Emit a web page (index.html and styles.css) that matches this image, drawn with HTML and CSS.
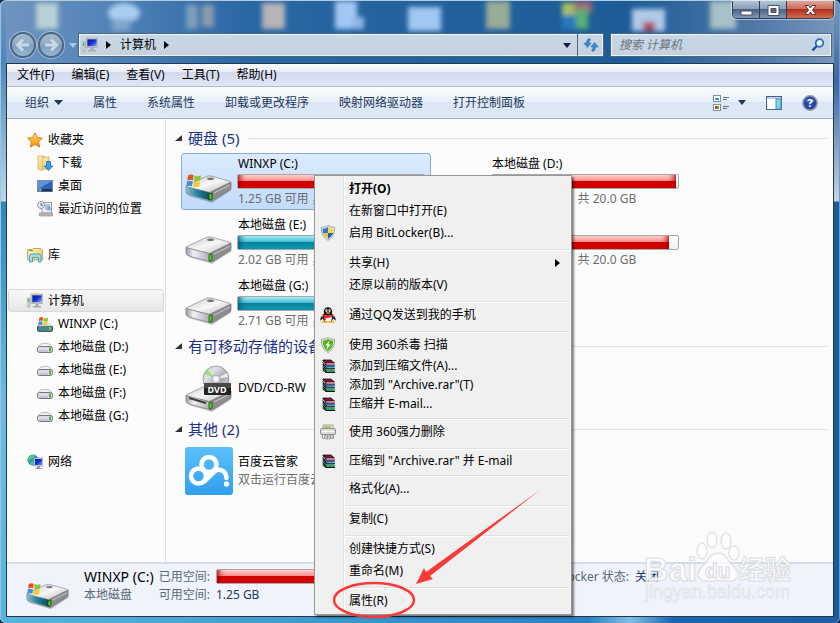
FILE: index.html
```html
<!DOCTYPE html>
<html lang="zh-CN">
<head>
    <meta charset="UTF-8">
    <meta name="viewport" content="width=device-width, initial-scale=1.0">
    <title>计算机</title>
    <link rel="stylesheet" href="styles.css">
</head>
<body>

    <!-- 图标定义 -->
    <svg class="defs" width="0" height="0" aria-hidden="true">
        <defs>
            <linearGradient id="gTop" x1="0" y1="0" x2="1" y2="1">
                <stop offset="0" stop-color="#c4c4c4"/><stop offset=".5" stop-color="#f8f8f8"/><stop offset="1" stop-color="#b4b4b4"/>
            </linearGradient>
            <linearGradient id="gFront" x1="0" y1="0" x2="1" y2="0">
                <stop offset="0" stop-color="#9a9aa0"/><stop offset=".3" stop-color="#f0f0f8"/><stop offset="1" stop-color="#a8a8b0"/>
            </linearGradient>
            <linearGradient id="gTeal" x1="0" y1="0" x2="1" y2="0">
                <stop offset="0" stop-color="#8fb8c8"/><stop offset=".5" stop-color="#1f7f98"/><stop offset="1" stop-color="#124a5c"/>
            </linearGradient>
            <linearGradient id="gScreen" x1="0" y1="0" x2="1" y2="1">
                <stop offset="0" stop-color="#0a1a8c"/><stop offset=".5" stop-color="#1030d8"/><stop offset="1" stop-color="#7fa8ff"/>
            </linearGradient>
            <linearGradient id="gCloud" x1="0" y1="0" x2="0" y2="1">
                <stop offset="0" stop-color="#5cc0fb"/><stop offset="1" stop-color="#2f9fee"/>
            </linearGradient>
            <linearGradient id="gStar" x1="0" y1="0" x2="0" y2="1">
                <stop offset="0" stop-color="#fff0a0"/><stop offset=".5" stop-color="#ffb52e"/><stop offset="1" stop-color="#f08a18"/>
            </linearGradient>
            <linearGradient id="gFolder" x1="0" y1="0" x2="1" y2="1">
                <stop offset="0" stop-color="#fff6c0"/><stop offset="1" stop-color="#e4c25c"/>
            </linearGradient>
            <linearGradient id="gDisc" x1="0" y1="0" x2="1" y2="1">
                <stop offset="0" stop-color="#b8d8a8"/><stop offset=".3" stop-color="#e0e0e8"/><stop offset=".6" stop-color="#a8a8ac"/><stop offset="1" stop-color="#e8d0e0"/>
            </linearGradient>
        </defs>

        <symbol id="flag" viewBox="0 0 16 16">
            <path d="M2 2.500Q4.500 .8 7.500 2.200L6.800 7.200Q4 6 1.200 7.500Z" fill="#e8501c"/>
            <path d="M8.500 2.500Q11.500 4 15 2.500L14.200 7.500Q11 9 7.800 7.500Z" fill="#8cc63c"/>
            <path d="M1 8.500Q4 7 6.600 8.200L5.900 13.200Q3 12 .3 13.500Z" fill="#3c8ee0"/>
            <path d="M7.600 8.500Q10.500 10 14 8.500L13.300 13.500Q10 15 6.900 13.500Z" fill="#fcc82c"/>
        </symbol>

        <symbol id="drive" viewBox="0 0 48 48">
            <path d="M3 38L27 45L47 32L44 30Z" fill="#000" opacity=".18"/>
            <path d="M1 29Q1 27.500 3 27L21 18.500Q23 17.500 26 18L44 23Q46 23.500 45.500 25L27 34.500L24 34.500Z" fill="url(#gTop)" stroke="#8a8a8a" stroke-width=".7"/>
            <path d="M1 28.500L24 34.500L26 43L4 37Q1 36 1 34Z" fill="url(#gFront)" stroke="#77777c" stroke-width=".7"/>
            <path d="M24.500 34.500L46 24V30Q46 31.500 44 32.500L28 42.500Q26.500 43.500 25 42.800Z" fill="#8d8d90" stroke="#707074" stroke-width=".7"/>
            <path d="M29 35L45 27" stroke="#c8c8cc"/>
            <ellipse cx="25.500" cy="20.800" rx="3.500" ry="1.200" fill="#777"/>
            <path d="M24 36L27 35V41L24 42Z" fill="#48d818" stroke="#1c5a10" stroke-width=".8"/>
        </symbol>

        <symbol id="drive-win" viewBox="0 0 48 48">
            <use href="#drive"/>
            <path d="M1 28.500L24 34.500L25 42.300L4 36.500Q1 35.500 1 33.500Z" fill="url(#gTeal)"/>
            <path d="M24 36L27 35V41L24 42Z" fill="#48d818" stroke="#123c18" stroke-width=".8"/>
            <use href="#flag" x="1" y="15" width="16" height="16"/>
        </symbol>

        <symbol id="dvd" viewBox="0 0 48 48">
            <circle cx="31" cy="15" r="13" fill="url(#gDisc)" stroke="#a0a0a4"/>
            <path d="M31 15L19 9L22 6Z" fill="#78e040" opacity=".7"/>
            <path d="M31 15L42 9L43 13Z" fill="#fff" opacity=".8"/>
            <circle cx="31" cy="15" r="4" fill="#e8e8ea" stroke="#b0b0b4"/>
            <circle cx="31" cy="15" r="1.500" fill="#fff"/>
            <use href="#drive" y="3"/>
            <path d="M4 34L21 39" stroke="#3c3c40" stroke-width="2"/>
            <rect x="19" y="19" width="27" height="12" rx="1" fill="#222"/>
            <rect x="19" y="19" width="27" height="5" fill="#484848"/>
        </symbol>

        <symbol id="cloud" viewBox="0 0 48 48">
            <rect width="48" height="48" rx="3" fill="url(#gCloud)"/>
            <g fill="none" stroke="#fff" stroke-width="4.500">
                <circle cx="24" cy="17.500" r="7.500"/>
                <circle cx="13.500" cy="29" r="7.500"/>
                <path d="M19 34.500L30 24Q34 21.500 38 24Q41.500 26.500 41.500 31" stroke-linecap="round"/>
            </g>
            <circle cx="41.500" cy="37" r="2.700" fill="#fff"/>
        </symbol>

        <symbol id="disk" viewBox="0 0 16 16">
            <path d="M.5 9L3.500 5Q8 3.500 12.500 5L15.500 9Z" fill="#f2f2f2" stroke="#c0c0c0"/>
            <rect x=".5" y="7.500" width="15" height="6" rx="2" fill="#dcdce4" stroke="#77777c"/>
            <path d="M2 12H11" stroke="#b0b0bc"/>
            <rect x="12" y="8.500" width="2" height="4" fill="#44b428"/>
        </symbol>

        <symbol id="disk-win" viewBox="0 0 16 16">
            <rect x=".5" y="9.500" width="15" height="6" rx="1.500" fill="#4c8494" stroke="#4c5c64"/>
            <path d="M.5 10L3 7.500H13L15.500 10Z" fill="#d8d8dc"/>
            <rect x="12" y="11" width="2" height="3" fill="#58d820"/>
            <use href="#flag" x="1" y="0" width="11" height="11"/>
        </symbol>

        <symbol id="pc" viewBox="0 0 16 16">
            <rect x="0" y="5" width="3" height="9" fill="#d4d8d8" stroke="#8c9494" stroke-width=".6"/>
            <rect x=".8" y="6" width="1.400" height="3" fill="#48c048"/>
            <rect x="4" y="1" width="12" height="9.500" fill="#d8d4c8" stroke="#9a9a92" stroke-width=".6"/>
            <rect x="5.300" y="2.300" width="9.400" height="7" fill="url(#gScreen)"/>
            <path d="M8.500 11H11.500V13H14V14.500H6V13H8.500Z" fill="#a8aaac"/>
        </symbol>

        <symbol id="net" viewBox="0 0 16 16">
            <circle cx="6" cy="6" r="5.500" fill="#2c8ce0"/>
            <path d="M2 3Q5 0 8 1L6 4L3 6L1 7ZM3 8L6 7L7 10L4 11Z" fill="#50d050"/>
            <rect x="7" y="4" width="9" height="8" fill="#d0d4dc" stroke="#8a8e96" stroke-width=".6"/>
            <rect x="8" y="5" width="7" height="6" fill="url(#gScreen)"/>
            <path d="M10 12H13V14H15V15H8V14H10Z" fill="#9a9ea4"/>
        </symbol>

        <symbol id="star" viewBox="0 0 16 16">
            <path d="M8 .8L10.200 5.600L15.400 6.200L11.600 9.800L12.600 15L8 12.400L3.400 15L4.400 9.800L.6 6.200L5.800 5.600Z" fill="url(#gStar)" stroke="#e07c14"/>
        </symbol>

        <symbol id="download" viewBox="0 0 16 16">
            <path d="M1 1H7V14L5 15.500L1 14Z" fill="url(#gFolder)" stroke="#c8a848" stroke-width=".7"/>
            <path d="M6 2H12V14H6Z" fill="url(#gFolder)" stroke="#c8a848" stroke-width=".7"/>
            <path d="M9.500 6.500H13.500V11H15.800L11.500 15.600L7.200 11H9.500Z" fill="#34a0f4" stroke="#1560b0" stroke-width=".7"/>
        </symbol>

        <symbol id="desktop" viewBox="0 0 16 16">
            <rect x=".5" y="2.500" width="15" height="11" fill="#2d62b8" stroke="#8088a0"/>
            <path d="M1 3H15L1 11Z" fill="#5c94e0"/>
            <rect x="1" y="11" width="14" height="2.500" fill="#203450"/>
            <circle cx="3" cy="12" r="1.800" fill="#48b8e8"/>
            <circle cx="3" cy="11.500" r=".8" fill="#f06c30"/>
        </symbol>

        <symbol id="recent" viewBox="0 0 16 16">
            <path d="M5 1.500H14.500V12H5Z" fill="#f4f4f6" stroke="#9a9aa0"/>
            <path d="M8 4H13M8 6H13M8 8H11" stroke="#6c94c8"/>
            <rect x="10.500" y="5.500" width="3" height="4" fill="#6ca8d8"/>
            <path d="M2.500 12H15.500V15H2.500Z" fill="#b8b8bc" stroke="#909094" stroke-width=".7"/>
            <circle cx="4" cy="4" r="3.500" fill="#eef2f6" stroke="#8a8e96"/>
            <path d="M4 2V4.300H6" fill="none" stroke="#44607c"/>
        </symbol>

        <symbol id="library" viewBox="0 0 16 16">
            <path d="M.5 2.500H5L6 1.500H14L15.500 3V13H.5Z" fill="url(#gFolder)" stroke="#c8a850"/>
            <path d="M2 3.500H6" stroke="#58b048"/>
            <path d="M2.500 15V9.500Q2.500 7 5.500 7H11Q14 7 14 9.500V15H11.500V10.500H5.500V15Z" fill="#9cdcf4" stroke="#3c90b8" stroke-width=".8"/>
        </symbol>

        <symbol id="uac" viewBox="0 0 16 16">
            <path d="M8 .5Q11 2.500 14.500 2.300Q15.500 11 8 15.500Q.5 11 1.500 2.300Q5 2.500 8 .5Z" fill="#e4e8ec" stroke="#9098a0" stroke-width=".8"/>
            <path d="M8 2V8H2.800Q2.400 6 2.800 3.700Q5.500 3.600 8 2Z" fill="#2c78d8"/>
            <path d="M8 2V8H13.200Q13.600 6 13.200 3.700Q10.500 3.600 8 2Z" fill="#fcd838"/>
            <path d="M8 8V14Q4 11.600 2.800 8Z" fill="#f8c428"/>
            <path d="M8 8V14Q12 11.600 13.200 8Z" fill="#1c60c4"/>
        </symbol>

        <symbol id="qq" viewBox="0 0 16 16">
            <path d="M2 9Q-.5 12 .8 13.500L3 11ZM14 9Q16.500 12 15.200 13.500L13 11Z" fill="#111"/>
            <ellipse cx="8" cy="10" rx="5.500" ry="5.200" fill="#111"/>
            <ellipse cx="8" cy="11" rx="3.900" ry="4" fill="#fff"/>
            <ellipse cx="8" cy="4.500" rx="4.200" ry="4.300" fill="#111"/>
            <ellipse cx="6.500" cy="3.500" rx="1.100" ry="1.500" fill="#fff"/>
            <ellipse cx="9.500" cy="3.500" rx="1.100" ry="1.500" fill="#fff"/>
            <circle cx="6.800" cy="3.700" r=".5"/><circle cx="9.200" cy="3.700" r=".5"/>
            <ellipse cx="8" cy="6" rx="2.300" ry=".8" fill="#f8a818"/>
            <path d="M2.800 7Q8 10 13.200 7L13.500 9Q8 12 5.800 10.500V13.200H3.800V9.800L2.500 9Z" fill="#e8281c"/>
            <ellipse cx="4.700" cy="15" rx="3" ry="1" fill="#f8a818"/>
            <ellipse cx="11.300" cy="15" rx="3" ry="1" fill="#f8a818"/>
        </symbol>

        <symbol id="shield" viewBox="0 0 16 16">
            <path d="M8 .5Q11 2.500 14.500 2.300Q15.500 11 8 15.500Q.5 11 1.500 2.300Q5 2.500 8 .5Z" fill="#e8ece8" stroke="#8c948c" stroke-width=".8"/>
            <path d="M8 2Q10.500 3.600 13.200 3.700Q13.600 10.500 8 14Q2.400 10.500 2.800 3.700Q5.500 3.600 8 2Z" fill="#50b414"/>
            <path d="M9.500 3.500L5 8.500H7.500L6.500 12.500L11 7.500H8.500Z" fill="#fff"/>
        </symbol>

        <symbol id="rar" viewBox="0 0 16 16">
            <path d="M3 2H11L14.500 5H6Z" fill="#8c1438" stroke="#111" stroke-width=".8"/>
            <path d="M6 5.800H14.500" stroke="#f070b0" stroke-width="1.300"/>
            <path d="M3 5.500L6 8H14.500V9.800H6L3 7.500Z" fill="#1c2c88"/>
            <path d="M6 9.200H14.500" stroke="#40c0e8" stroke-width="1.200"/>
            <path d="M3 9L6 11.500H14.500V14H6L3 11.500Z" fill="#0c5c30"/>
            <path d="M6 13H14.500" stroke="#38d078" stroke-width="1.300"/>
            <path d="M6 7.200H15M6 10.700H15M6 14.500H15M2.500 2.500L6 5.500V7.200L2.500 4.500M2.500 6L6 9V10.700L2.500 8M2.500 10L6 13V14.500L2.500 12" stroke="#111" fill="none"/>
        </symbol>

        <symbol id="shredder" viewBox="0 0 16 16">
            <path d="M3 5V1H13V5Z" fill="#f4f4e8" stroke="#888" stroke-width=".8"/>
            <path d="M4 3H11" stroke="#9cb438" stroke-width="1.500"/>
            <rect x=".5" y="4.500" width="15" height="6" rx="1.500" fill="#dcdcdc" stroke="#909090"/>
            <path d="M2 7.500H14" stroke="#f8f8f8"/>
            <path d="M2.500 10.500V14.500H4.500V11M6 11V15H7.500V11M9 11V15H10.500V11M12 11V14.500H13.500V10.500" fill="none" stroke="#909090" stroke-width=".9"/>
        </symbol>
    </svg>

    <div class="window">
        <!-- 透过标题栏看到的模糊桌面图标 -->
        <svg class="glass" aria-hidden="true">
            <filter id="soft"><feGaussianBlur stdDeviation="2.500"/></filter>
            <g filter="url(#soft)">
                <rect x="36" y="2" width="22" height="26" fill="#b8d0d8"/>
                <ellipse cx="124" cy="12" rx="16" ry="10" fill="#a8cdf0"/>
                <rect x="112" y="18" width="18" height="12" fill="#7fa6cc"/>
                <rect x="186" y="4" width="12" height="24" fill="#7f9dbc"/>
                <rect x="202" y="4" width="12" height="22" fill="#8a9dac"/>
                <rect x="262" y="2" width="23" height="26" fill="#b8b4b8"/>
                <rect x="335" y="0" width="22" height="28" fill="#a4c8f4"/>
                <rect x="352" y="16" width="12" height="12" fill="#90b8e8"/>
                <rect x="408" y="6" width="33" height="24" fill="#a0c8f0"/>
                <rect x="486" y="0" width="24" height="28" fill="#98ac98"/>
                <rect x="562" y="2" width="14" height="13" fill="#a8c060"/>
                <rect x="574" y="0" width="18" height="12" fill="#9c6878"/>
                <rect x="562" y="14" width="14" height="14" fill="#2878c0"/>
                <rect x="576" y="8" width="12" height="20" fill="#58b070"/>
                <rect x="632" y="8" width="33" height="22" fill="#b0cae8"/>
                <rect x="643" y="21" width="12" height="9" fill="#b04858"/>
                <rect x="710" y="0" width="26" height="28" fill="#a8c0c8"/>
            </g>
        </svg>

        <header class="titlebar">
            <div class="controls">
                <button class="control" aria-label="最小化">
                    <svg width="13" height="12"><rect x="1" y="7" width="11" height="4" fill="#fff" stroke="#4a5264"/></svg>
                </button>
                <button class="control" aria-label="最大化">
                    <svg width="13" height="12"><path d="M1 1.500H12V11.500H1ZM4 4.500V8.500H9V4.500Z" fill="#fff" fill-rule="evenodd" stroke="#4a5264"/></svg>
                </button>
                <button class="control close" aria-label="关闭">
                    <svg width="13" height="12"><path d="M1 1.500H4.500L6.500 4L8.500 1.500H12L8.500 6L12 10.500H8.500L6.500 8L4.500 10.500H1L4.500 6Z" fill="#fff" stroke="#5a3438"/></svg>
                </button>
            </div>
        </header>

        <div class="navbar">
            <div class="history">
                <button class="round" aria-label="后退">
                    <svg width="16" height="16"><path d="M8 2.500L2.500 8L8 13.500M3 8H14" fill="none" stroke="#c8d8e6" stroke-width="3"/></svg>
                </button>
                <button class="round" aria-label="前进">
                    <svg width="16" height="16"><path d="M8 2.500L13.500 8L8 13.500M13 8H2" fill="none" stroke="#c8d8e6" stroke-width="3"/></svg>
                </button>
                <button class="recent-pages" aria-label="最近的页面">
                    <svg width="8" height="5"><path d="M0 0H8L4 5Z" fill="#a8c8e8"/></svg>
                </button>
            </div>
            <div class="address">
                <svg width="16" height="16"><use href="#pc"/></svg>
                <svg class="crumb-arrow" width="5" height="8"><path d="M0 0L5 4L0 8Z"/></svg>
                <button class="crumb">计算机</button>
                <svg class="crumb-arrow" width="5" height="8"><path d="M0 0L5 4L0 8Z"/></svg>
                <button class="address-drop" aria-label="以前的位置">
                    <svg width="8" height="5"><path d="M0 0H8L4 5Z" fill="#0c1c44"/></svg>
                </button>
                <button class="refresh" aria-label="刷新">
                    <svg width="16" height="16"><path d="M6.500 1.500Q3.500 2 3.500 6H.8L4.500 10.500L8 6H5.800Q5.800 3.500 7.500 3ZM9.500 14.500Q12.500 14 12.500 10H15.200L11.500 5.500L8 10H10.200Q10.200 12.500 8.500 13Z" fill="#3c8cd0" stroke="#1c5c9c" stroke-width=".5"/></svg>
                </button>
            </div>
            <div class="search">
                <input type="text" placeholder="搜索 计算机" aria-label="搜索 计算机">
                <svg width="14" height="14"><circle cx="8.500" cy="5" r="3.800" fill="#e8f2fa" stroke="#2c6cc0" stroke-width="1.800"/><path d="M5.800 8L1.500 12.500" stroke="#1c4c98" stroke-width="2.400"/></svg>
            </div>
        </div>

        <div class="client">
            <nav class="menubar">
                <button>文件(F)</button>
                <button>编辑(E)</button>
                <button>查看(V)</button>
                <button>工具(T)</button>
                <button>帮助(H)</button>
            </nav>

            <div class="toolbar">
                <button>组织 <svg width="9" height="5"><path d="M0 0H9L4.500 5Z" fill="#1e395b"/></svg></button>
                <button>属性</button>
                <button>系统属性</button>
                <button>卸载或更改程序</button>
                <button>映射网络驱动器</button>
                <button>打开控制面板</button>
                <div class="view-tools">
                    <button aria-label="更改视图">
                        <svg width="16" height="16">
                            <rect x=".5" y=".5" width="7" height="6" fill="#fff" stroke="#8090a4"/><path d="M2 4H6" stroke="#2ca8c0" stroke-width="2"/>
                            <rect x=".5" y="9.500" width="7" height="6" fill="#fff" stroke="#8090a4"/><path d="M2 12.500H4" stroke="#c03c28" stroke-width="3"/><path d="M4 12.500H6" stroke="#58b018" stroke-width="3"/>
                            <path d="M10 2.500H16M10 4.500H14M10 11.500H16M10 13.500H14" stroke="#60708c"/>
                        </svg>
                        <svg width="8" height="5"><path d="M0 0H8L4 5Z" fill="#1e395b"/></svg>
                    </button>
                    <button aria-label="显示预览窗格">
                        <svg width="16" height="14"><rect x=".5" y=".5" width="15" height="13" fill="#fff" stroke="#44648c"/><path d="M1 2H15" stroke="#c0d0e0" stroke-width="2"/><rect x="10" y="3" width="5" height="10" fill="#80d4ec" stroke="#4890b0"/></svg>
                    </button>
                    <button aria-label="获取帮助">
                        <svg width="16" height="16"><circle cx="8" cy="8" r="7.200" fill="#2448a8" stroke="#989ca4" stroke-width="1.500"/><path d="M3 6Q8 1 13 6Q8 9 3 6Z" fill="#6c90e0" opacity=".7"/><text x="8" y="12" text-anchor="middle" class="help-mark">?</text></svg>
                    </button>
                </div>
            </div>

            <main class="main">
                <nav class="sidebar">
                    <ul>
                        <li><a href="#"><svg><use href="#star"/></svg>收藏夹</a></li>
                        <li class="sub"><a href="#"><svg><use href="#download"/></svg>下载</a></li>
                        <li class="sub"><a href="#"><svg><use href="#desktop"/></svg>桌面</a></li>
                        <li class="sub"><a href="#"><svg><use href="#recent"/></svg>最近访问的位置</a></li>
                    </ul>
                    <ul>
                        <li><a href="#"><svg><use href="#library"/></svg>库</a></li>
                    </ul>
                    <ul>
                        <li class="current"><a href="#"><svg><use href="#pc"/></svg>计算机</a></li>
                        <li class="sub"><a href="#"><svg><use href="#disk-win"/></svg>WINXP (C:)</a></li>
                        <li class="sub"><a href="#"><svg><use href="#disk"/></svg>本地磁盘 (D:)</a></li>
                        <li class="sub"><a href="#"><svg><use href="#disk"/></svg>本地磁盘 (E:)</a></li>
                        <li class="sub"><a href="#"><svg><use href="#disk"/></svg>本地磁盘 (F:)</a></li>
                        <li class="sub"><a href="#"><svg><use href="#disk"/></svg>本地磁盘 (G:)</a></li>
                    </ul>
                    <ul>
                        <li><a href="#"><svg><use href="#net"/></svg>网络</a></li>
                    </ul>
                </nav>

                <div class="content">
                    <section>
                        <h2><svg width="7" height="6"><path d="M7 0V6H0Z" fill="#333"/></svg>硬盘 (5)</h2>
                        <div class="tiles">
                            <a href="#" class="tile selected">
                                <svg><use href="#drive-win"/></svg>
                                <div class="info">
                                    <div class="name">WINXP (C:)</div>
                                    <div class="bar"><div class="fill red" style="width: 94%"></div></div>
                                    <div class="note space"><span>1.25 GB 可用</span><span>，共 20.0 GB</span></div>
                                </div>
                            </a>
                            <a href="#" class="tile">
                                <svg><use href="#drive"/></svg>
                                <div class="info">
                                    <div class="name">本地磁盘 (D:)</div>
                                    <div class="bar"><div class="fill red" style="width: 99%"></div></div>
                                    <div class="note space"><span>0.21 GB 可用</span><span>，共 20.0 GB</span></div>
                                </div>
                            </a>
                            <a href="#" class="tile">
                                <svg><use href="#drive"/></svg>
                                <div class="info">
                                    <div class="name">本地磁盘 (E:)</div>
                                    <div class="bar"><div class="fill teal" style="width: 89%"></div></div>
                                    <div class="note space"><span>2.02 GB 可用</span><span>，共 20.0 GB</span></div>
                                </div>
                            </a>
                            <a href="#" class="tile">
                                <svg><use href="#drive"/></svg>
                                <div class="info">
                                    <div class="name">本地磁盘 (F:)</div>
                                    <div class="bar"><div class="fill red" style="width: 95%"></div></div>
                                    <div class="note space"><span>1.02 GB 可用</span><span>，共 20.0 GB</span></div>
                                </div>
                            </a>
                            <a href="#" class="tile">
                                <svg><use href="#drive"/></svg>
                                <div class="info">
                                    <div class="name">本地磁盘 (G:)</div>
                                    <div class="bar"><div class="fill teal" style="width: 86%"></div></div>
                                    <div class="note space"><span>2.71 GB 可用</span><span>，共 20.0 GB</span></div>
                                </div>
                            </a>
                        </div>
                    </section>
                    <section>
                        <h2><svg width="7" height="6"><path d="M7 0V6H0Z" fill="#333"/></svg>有可移动存储的设备 (1)</h2>
                        <div class="tiles">
                            <a href="#" class="tile">
                                <svg><use href="#dvd"/><text x="32" y="29" text-anchor="middle" class="dvd-label">DVD</text></svg>
                                <div class="info"><div class="name">DVD/CD-RW</div></div>
                            </a>
                        </div>
                    </section>
                    <section>
                        <h2><svg width="7" height="6"><path d="M7 0V6H0Z" fill="#333"/></svg>其他 (2)</h2>
                        <div class="tiles">
                            <a href="#" class="tile">
                                <svg><use href="#cloud"/></svg>
                                <div class="info">
                                    <div class="name">百度云管家</div>
                                    <div class="note">双击运行百度云管家</div>
                                </div>
                            </a>
                        </div>
                    </section>
                </div>
            </main>

            <footer class="details">
                <svg class="details-icon"><use href="#drive-win"/></svg>
                <div class="details-name">
                    <div class="title">WINXP (C:)</div>
                    <div class="label">本地磁盘</div>
                </div>
                <dl>
                    <dt>已用空间:</dt>
                    <dd><div class="bar"><div class="fill red" style="width: 94%"></div></div></dd>
                    <dt>可用空间:</dt>
                    <dd>1.25 GB</dd>
                </dl>
                <dl class="bitlocker">
                    <dt>BitLocker 状态:</dt>
                    <dd>关闭</dd>
                </dl>
            </footer>
        </div>

        <!-- 右键菜单 -->
        <div class="context-menu">
            <button class="default">打开(O)</button>
            <button>在新窗口中打开(E)</button>
            <button><svg><use href="#uac"/></svg>启用 BitLocker(B)...</button>
            <hr>
            <button>共享(H)<span class="more"></span></button>
            <button>还原以前的版本(V)</button>
            <hr>
            <button><svg><use href="#qq"/></svg>通过QQ发送到我的手机</button>
            <hr>
            <button><svg><use href="#shield"/></svg>使用 360杀毒 扫描</button>
            <button class="short"><svg><use href="#rar"/></svg>添加到压缩文件(A)...</button>
            <button class="short"><svg><use href="#rar"/></svg>添加到 "Archive.rar"(T)</button>
            <button class="short"><svg><use href="#rar"/></svg>压缩并 E-mail...</button>
            <hr>
            <button><svg><use href="#shredder"/></svg>使用 360强力删除</button>
            <hr>
            <button class="short"><svg><use href="#rar"/></svg>压缩到 "Archive.rar" 并 E-mail</button>
            <hr>
            <button>格式化(A)...</button>
            <hr>
            <button>复制(C)</button>
            <hr>
            <button>创建快捷方式(S)</button>
            <button>重命名(M)</button>
            <hr>
            <button>属性(R)</button>
        </div>

        <!-- 红圈和箭头 -->
        <svg class="marks" width="212" height="134" viewBox="0 0 212 134" aria-hidden="true">
            <ellipse cx="44" cy="113" rx="40" ry="17" fill="none" stroke="#f93a37" stroke-width="2.500"/>
            <path d="M210 3L100 89L103 92L86 97L94 81L96 85Z" fill="#f93a37"/>
        </svg>

        <!-- 水印 -->
        <svg class="watermark" width="156" height="76" viewBox="0 0 156 76" aria-hidden="true">
            <g fill="#fff" stroke="#dcdde0" stroke-width="1.500">
                <text x="3" y="50" class="wm-big">Bai</text>
                <path d="M77 22Q83 22 88 30L95 38Q99 44 95 48Q92 51 84 50Q77 49 70 50Q62 51 59 48Q55 44 59 38L66 30Q71 22 77 22Z"/>
                <ellipse cx="61" cy="20" rx="5" ry="8"/>
                <ellipse cx="71" cy="9" rx="5" ry="8"/>
                <ellipse cx="85" cy="10" rx="5" ry="8"/>
                <ellipse cx="93" cy="22" rx="5" ry="7"/>
                <text x="64" y="47" class="wm-du">du</text>
                <text x="98" y="48" class="wm-cn">经验</text>
                <text x="4" y="67" class="wm-url">jingyan.baidu.com</text>
            </g>
        </svg>
    </div>

</body>
</html>
```

FILE: styles.css
```css
* {
    box-sizing: border-box;
}

body {
    margin: 0;
    background: #10284c;
    font-family: "Noto Sans", "Noto Sans CJK SC", sans-serif;
    font-size: 12px;
    line-height: 18px;
    color: #000;
}

button {
    padding: 0;
    border: none;
    background: none;
    font: inherit;
    color: inherit;
    white-space: nowrap;
}

a {
    color: inherit;
    text-decoration: none;
}

.defs {
    position: absolute;
}

/* 窗口边框 */
.window {
    position: relative;
    display: flex;
    flex-direction: column;
    min-height: 100vh;
    padding: 0 6px 6px;
    border-top: 1px solid #b4cbd8;
    border-radius: 6px;
    background:
        linear-gradient(#7096c0, #4c86bc 60px, #bcd8ea 200px, #2c88bc 201px, #6cbce0 400px, #58b4dc) left / 6px 100% no-repeat,
        linear-gradient(#7c98bc, #3a68a4 80px, #c4d4e4 200px, #1c5a9c 201px, #1c5a9c) right / 6px 100% no-repeat,
        linear-gradient(to right, #58b4dc, #3c98cc 40%, #2c80c0 70%, #80c0e8 75%, #1c68b0 80%, #1c60a4) bottom / 100% 7px no-repeat,
        linear-gradient(to right, #7096c0, #5484b8 12%, #2866a4 30%, #1c5c98 75%, #5078a8 90%, #7c98bc);
    box-shadow: inset 1px 0 #9cc4dc, inset -1px 0 #6c9cc8;
}

.glass {
    position: absolute;
    top: 0;
    left: 0;
    width: 100%;
    height: 63px;
}

.titlebar {
    position: relative;
    display: flex;
    justify-content: flex-end;
    height: 32px;
}

.controls {
    display: flex;
    height: 18px;
    border: 1px solid #303c50;
    border-top: none;
    border-radius: 0 0 5px 5px;
    box-shadow: 0 0 0 1px rgba(255, 255, 255, 0.5);
    overflow: hidden;
}

.control {
    display: flex;
    align-items: center;
    justify-content: center;
    width: 27px;
    border-right: 1px solid #303c50;
    background: linear-gradient(#b4c4d4, #8ca0b8 45%, #4c6484 50%, #8098b8);
}

.control.close {
    width: 46px;
    border-right: none;
    background: linear-gradient(#e0a498, #cc6c5c 45%, #b0301c 50%, #d46c4c);
}

/* 地址栏 */
.navbar {
    position: relative;
    display: flex;
    gap: 6px;
    height: 30px;
    padding: 0 2px 0 4px;
}

.history {
    display: flex;
    align-items: center;
    gap: 2px;
    height: 24px;
    width: 62px;
}

.round {
    display: flex;
    align-items: center;
    justify-content: center;
    flex: none;
    width: 26px;
    height: 26px;
    border: 2px solid #4c6884;
    border-radius: 50%;
    background: linear-gradient(#a8bcd0, #90a8c0 50%, #7c9cbc 50%, #98b8d4);
    box-shadow: 0 0 0 1px rgba(255, 255, 255, 0.4);
}

.recent-pages {
    display: flex;
    margin-left: 3px;
}

.address,
.search {
    display: flex;
    align-items: center;
    height: 24px;
    border: 1px solid #4c6880;
    background: linear-gradient(#c8d8e6, #c4d2de);
    box-shadow: inset 0 0 0 1px rgba(255, 255, 255, 0.7);
}

.address {
    flex: 1;
    padding-left: 3px;
}

.crumb-arrow {
    margin: 0 9px 0 8px;
}

.address-drop {
    display: flex;
    margin: 0 6px 0 auto;
}

.refresh {
    display: flex;
    align-items: center;
    justify-content: center;
    width: 26px;
    height: 22px;
    border-left: 1px solid #4c6880;
}

.search {
    width: 222px;
    padding: 0 6px 0 8px;
}

.search input {
    flex: 1;
    min-width: 0;
    padding: 0;
    border: none;
    outline: none;
    background: none;
    font: inherit;
}

.search input::placeholder {
    font-style: italic;
    color: #6a737c;
}

.client {
    position: relative;
    display: flex;
    flex: 1;
    flex-direction: column;
    border: 1px solid #203850;
    background: #fcfcfc;
}

.menubar {
    display: flex;
    gap: 17px;
    height: 23px;
    padding-left: 10px;
    border-bottom: 1px solid #b4bccc;
    background: linear-gradient(#fdfdfe, #e9ecf5 35%, #d5d9ed 36%, #e1e6f6);
}

.toolbar {
    display: flex;
    align-items: center;
    gap: 30px;
    height: 32px;
    padding: 0 15px 0 18px;
    border-bottom: 1px solid #a0afc3;
    background: linear-gradient(#fafdfe, #e7f0fa 48%, #dce6f4 50%, #dde9f7);
    color: #1e395b;
}

.toolbar button {
    display: flex;
    align-items: center;
    gap: 5px;
}

.view-tools {
    display: flex;
    align-items: center;
    gap: 20px;
    margin-left: auto;
}

.view-tools button {
    gap: 9px;
}

.help-mark {
    font-size: 11px;
    font-weight: bold;
    fill: #fff;
}

.main {
    display: flex;
    flex: 1;
}

/* 导航窗格 */
.sidebar {
    flex: none;
    width: 159px;
    padding: 9px 1px 0;
    border-right: 1px solid #d6e2f4;
}

.sidebar ul {
    margin: 0 0 23px;
    padding: 0;
    list-style: none;
}

.sidebar a {
    display: flex;
    align-items: center;
    gap: 5px;
    height: 23px;
    padding-left: 19px;
}

.sidebar .sub a {
    padding-left: 29px;
}

.sidebar svg {
    width: 16px;
    height: 16px;
}

.sidebar .current a {
    padding-left: 18px;
    border: 1px solid #d8d8d8;
    border-radius: 3px;
    background: linear-gradient(#f8f8f8, #e6e6e6);
}

/* 文件列表 */
.content {
    flex: 1;
    min-width: 0;
    padding: 9px 6px 0 9px;
}

.content h2 {
    display: flex;
    align-items: center;
    height: 20px;
    margin: 0 0 5px;
    font-size: 15px;
    font-weight: normal;
    color: #1e3287;
}

.content h2 svg {
    margin-right: 6px;
}

.content h2::after {
    content: "";
    flex: 1;
    height: 1px;
    margin-left: 8px;
    background: #e2e2e2;
}

.tiles {
    display: grid;
    grid-template-columns: repeat(auto-fill, 250px);
    gap: 4px;
    margin: 0 0 4px 6px;
}

.tile {
    display: flex;
    align-items: center;
    gap: 4px;
    min-height: 54px;
    padding: 1px 5px 1px 3px;
    border: 1px solid transparent;
    border-radius: 3px;
}

.tile.selected {
    border-color: #84acdd;
    background: linear-gradient(#dcebfc, #c1dbfc);
}

.tile svg {
    flex: none;
    width: 48px;
    height: 48px;
}

.dvd-label {
    font-size: 9px;
    font-weight: bold;
    fill: #fff;
}

.info {
    flex: 1;
}

.name,
.note {
    padding-left: 1px;
}

.note {
    color: #6d6d6d;
}

.note.space {
    display: flex;
    gap: 3px;
}

.bar {
    height: 15px;
    margin: 1px 0;
    border: 1px solid #a8a8a8;
    border-radius: 2px;
    background: linear-gradient(#fff, #f0f0f4);
}

.fill {
    height: 100%;
}

.red {
    background: linear-gradient(#ffd0d0, #ff8c8c 45%, #cc0000 46%, #dc0000 75%, #f80000);
    box-shadow: inset 6px -3px 6px -4px #a80000, inset -6px -3px 6px -4px #a80000;
}

.teal {
    background: linear-gradient(#a4ecf8, #44bcd4 45%, #088098 46%, #0894ac 75%, #14b4cc);
    box-shadow: inset 6px -3px 6px -4px #04586c;
}

/* 详细信息窗格 */
.details {
    display: flex;
    min-height: 54px;
    padding: 4px 0 0 17px;
    border-top: 2px solid #d0dbec;
    background: #f0f3fb;
    color: #1e395b;
}

.details-icon {
    width: 48px;
    height: 44px;
}

.details-name {
    margin-left: 12px;
}

.title {
    font-size: 14px;
    color: #000;
}

.label,
.details dt {
    color: #5a6779;
}

.details dl {
    display: grid;
    grid-template-columns: auto 190px;
    grid-auto-rows: 18px;
    column-gap: 6px;
    margin: 0 0 0 5px;
}

.details dd {
    margin: 0;
}

.details .bitlocker {
    margin-left: auto;
    padding-right: 8px;
}

/* 右键菜单 */
.context-menu {
    position: absolute;
    top: 174px;
    left: 314px;
    width: 258px;
    padding: 2px;
    border: 1px solid #979797;
    background:
        linear-gradient(to right, transparent 28px, #e0e0e0 28px, #e0e0e0 29px, #fff 29px, #fff 30px, transparent 30px),
        #f0f0f0;
    box-shadow: 2px 2px 2px rgba(0, 0, 0, 0.5);
}

.context-menu button {
    display: flex;
    position: relative;
    align-items: center;
    width: 100%;
    height: 22px;
    padding-left: 32px;
}

.context-menu .short {
    height: 19px;
}

.context-menu .default {
    font-weight: bold;
}

.context-menu button svg {
    width: 16px;
    height: 16px;
    margin: 0 13px 0 -29px;
}

.context-menu hr {
    height: 2px;
    margin: 5px 0 1px 28px;
    border: none;
    border-top: 1px solid #e0e0e0;
    background: #fff;
}

.more {
    margin: 0 9px 0 auto;
    border: 4px solid transparent;
    border-right: none;
    border-left: 5px solid #000;
}

.marks {
    position: absolute;
    top: 486px;
    left: 330px;
}

.watermark {
    position: absolute;
    right: 43px;
    bottom: 16px;
    opacity: 0.8;
}

.wm-big {
    font: bold 34px "Liberation Sans", sans-serif;
}

.wm-du {
    font: bold 21px "Liberation Sans", sans-serif;
}

.wm-cn {
    font: bold 26px "Noto Sans CJK SC", sans-serif;
}

.wm-url {
    font: 18px "Liberation Sans", sans-serif;
    stroke-width: 1px;
}
```
